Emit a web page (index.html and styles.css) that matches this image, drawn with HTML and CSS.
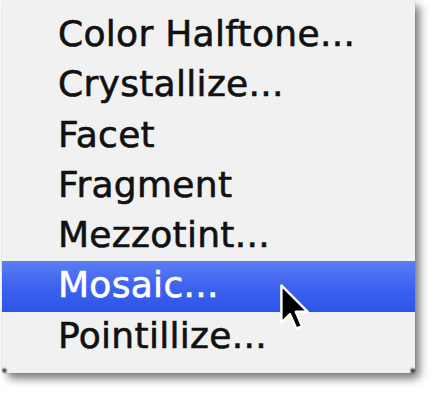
FILE: index.html
```html
<!DOCTYPE html>
<html>
<head>
<meta charset="utf-8">
<link rel="stylesheet" href="styles.css">
</head>
<body>
<div class="stage">
  <div class="menu">
    <div class="item">Color Halftone...</div>
    <div class="item">Crystallize...</div>
    <div class="item">Facet</div>
    <div class="item">Fragment</div>
    <div class="item">Mezzotint...</div>
    <div class="item selected">Mosaic...</div>
    <div class="item">Pointillize...</div>
  </div>
  <svg class="cursor" width="30" height="48" viewBox="0 0 12.5 20" xmlns="http://www.w3.org/2000/svg">
    <path d="M1 1 L1 16.5 L4.6 13 L7.2 19 L9.6 18 L7 12 L12 12 Z" fill="#000" stroke="#fff" stroke-width="1" stroke-linejoin="round"/>
  </svg>
</div>
</body>
</html>
```
FILE: styles.css
```css
html, body {
  margin: 0;
  padding: 0;
  background: #ffffff;
}
.stage {
  position: relative;
  width: 434px;
  height: 394px;
  overflow: hidden;
}
.menu {
  position: relative;
  margin-left: 2px;
  width: 413px;
  padding: 10px 0 11px 0;
  background: #f1f1f1;
  border-radius: 0 0 6px 6px;
  box-shadow: 5px 6px 9px rgba(0,0,0,0.5), 0 0 1px rgba(0,0,0,0.4);
  font-family: "DejaVu Sans", "Liberation Sans", sans-serif;
  font-size: 36px;
  color: #111;
}
.menu::before,
.menu::after {
  content: "";
  position: absolute;
  bottom: -1px;
  width: 7px;
  height: 7px;
  background: radial-gradient(circle at center, rgba(0,0,0,0.85), rgba(0,0,0,0) 70%);
}
.menu::before { left: -1px; }
.menu::after { right: -1px; }
.item {
  height: 50.3px;
  line-height: 48px;
  padding-left: 56px;
  white-space: nowrap;
  letter-spacing: 0.3px;
  -webkit-text-stroke: 0.6px currentColor;
}
.item.selected {
  color: #fff;
  background: linear-gradient(#5b7df4, #3d63ef 50%, #2c54e8);
}
.cursor {
  position: absolute;
  left: 279px;
  top: 283px;
}
```
